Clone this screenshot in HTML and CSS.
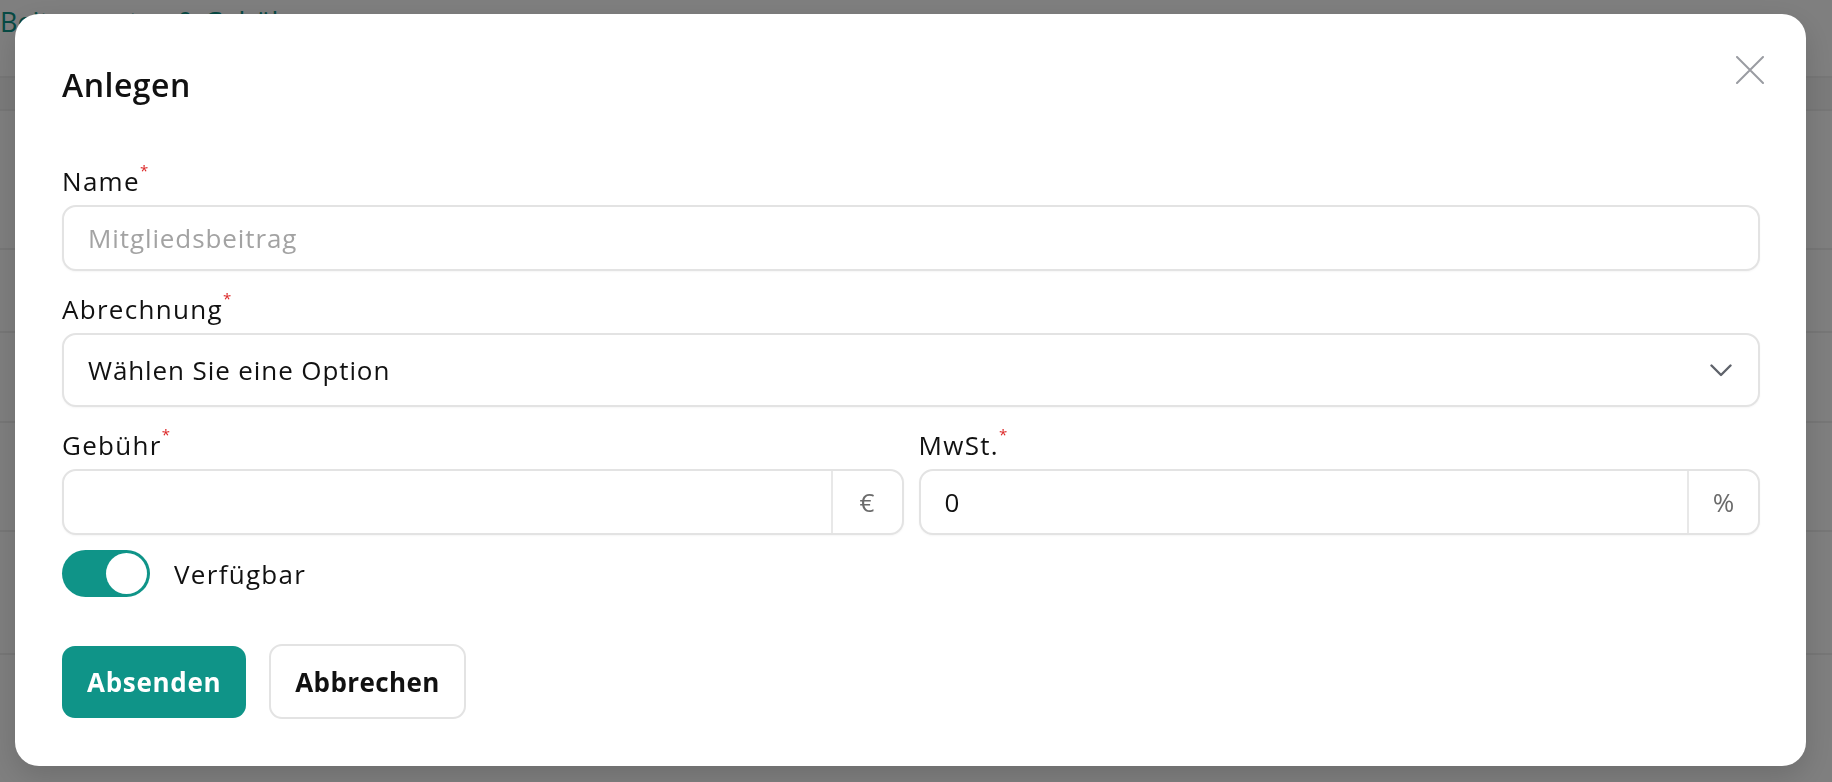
FILE: index.html
```html
<!DOCTYPE html>
<html lang="de">
<head>
<meta charset="utf-8">
<title>Anlegen</title>
<link rel="stylesheet" href="styles.css">
</head>
<body>
<div class="page">
  <h1 class="page-title">Beitragsarten &amp; Gebühren</h1>
  <div class="table">
    <div class="row head"></div>
    <div class="row"></div>
    <div class="row"></div>
    <div class="row"></div>
    <div class="row"></div>
    <div class="row"></div>
  </div>
</div>
<div class="overlay"></div>
<div class="modal" role="dialog">
  <h2 class="modal-title">Anlegen</h2>
  <button class="close" aria-label="Schließen">
    <svg width="28" height="28" viewBox="0 0 28 28"><path d="M1 1 L27 27 M27 1 L1 27" stroke="#9a9ca2" stroke-width="2" fill="none" stroke-linecap="round"/></svg>
  </button>
  <form class="form">
    <div class="field">
      <label class="label">Name<sup class="req">*</sup></label>
      <div class="input"><span class="placeholder">Mitgliedsbeitrag</span></div>
    </div>
    <div class="field">
      <label class="label">Abrechnung<sup class="req">*</sup></label>
      <div class="input select"><span class="value">Wählen Sie eine Option</span>
        <svg class="chev" width="22" height="13" viewBox="0 0 22 13"><path d="M1.5 1.5 L11 11 L20.5 1.5" stroke="#5f636b" stroke-width="2.4" fill="none" stroke-linecap="round" stroke-linejoin="round"/></svg>
      </div>
    </div>
    <div class="two">
      <div class="field">
        <label class="label">Gebühr<sup class="req">*</sup></label>
        <div class="input group"><span class="grow"></span><span class="addon">€</span></div>
      </div>
      <div class="field">
        <label class="label">MwSt.<sup class="req">*</sup></label>
        <div class="input group"><span class="grow value">0</span><span class="addon">%</span></div>
      </div>
    </div>
    <div class="switch-row">
      <span class="switch"><span class="knob"></span></span>
      <span class="switch-label">Verfügbar</span>
    </div>
    <div class="actions">
      <button type="button" class="btn primary">Absenden</button>
      <button type="button" class="btn secondary">Abbrechen</button>
    </div>
  </form>
</div>
</body>
</html>
```
FILE: styles.css
```css
html, body {
  margin: 0;
  padding: 0;
  height: 100%;
  overflow: hidden;
}
body {
  font-family: "Open Sans", Lato, sans-serif;
  background: #ffffff;
  color: #111111;
}
.page-title {
  margin: 0;
  padding: 6px 0 0 0;
  font-size: 27px;
  font-weight: 500;
  line-height: 32px;
  color: #0d9488;
  height: 76px;
  box-sizing: border-box;
}
.table {
  border-top: 2px solid #eeeeee;
}
.row {
  border-bottom: 2px solid #eeeeee;
  box-sizing: border-box;
}
.row.head { height: 33px; background: #f6f6f6; }
.row:nth-child(2) { height: 139px; }
.row:nth-child(3) { height: 83px; }
.row:nth-child(4) { height: 90px; }
.row:nth-child(5) { height: 109px; }
.row:nth-child(6) { height: 123px; }

.overlay {
  position: fixed;
  inset: 0;
  background: rgba(0, 0, 0, 0.5);
}
.modal {
  position: fixed;
  left: 15px;
  top: 14px;
  width: 1791px;
  box-sizing: border-box;
  padding: 51px 46px 47px 47px;
  background: #ffffff;
  border-radius: 24px;
  box-shadow: 0 10px 30px rgba(0, 0, 0, 0.15);
}
.modal-title {
  margin: 0;
  font-size: 32px;
  line-height: 40px;
  font-weight: 600;
  letter-spacing: 0.5px;
  color: #111111;
}
.close {
  position: absolute;
  top: 42px;
  right: 42px;
  width: 28px;
  height: 28px;
  padding: 0;
  border: 0;
  background: transparent;
}
.close svg { display: block; }
.form {
  margin-top: 60px;
  display: flex;
  flex-direction: column;
  gap: 22px;
}
.field {
  display: flex;
  flex-direction: column;
  gap: 8px;
  min-width: 0;
}
.label {
  font-size: 26px;
  line-height: 32px;
  font-weight: 500;
  letter-spacing: 1.3px;
  color: #111111;
}
.req {
  color: #dc2626;
  font-size: 15px;
  vertical-align: top;
  line-height: 15px;
  margin-left: 0;
  letter-spacing: 0;
  position: relative;
  top: -2px;
}
.input {
  height: 66px;
  box-sizing: border-box;
  border: 2px solid #e3e3e3;
  border-radius: 14px;
  display: flex;
  align-items: center;
  padding: 0 24px;
  font-size: 26px;
  letter-spacing: 0.9px;
  background: #ffffff;
  box-shadow: 0 1px 2px rgba(0, 0, 0, 0.04);
}
.placeholder { color: #a3a3a3; }
.value { color: #111111; }
.select {
  height: 74px;
  justify-content: space-between;
  padding-right: 26px;
}
.chev { display: block; }
.two {
  display: grid;
  grid-template-columns: 1fr 1fr;
  gap: 15px;
}
.group {
  padding: 0;
  align-items: stretch;
}
.group .grow {
  flex: 1;
  display: flex;
  align-items: center;
  padding-left: 24px;
}
.addon {
  width: 69px;
  border-left: 2px solid #e8e8e8;
  display: flex;
  align-items: center;
  justify-content: center;
  color: #6b6b6b;
  font-size: 26px;
  letter-spacing: 0;
}
.switch-row {
  margin-top: -7px;
  display: flex;
  align-items: center;
  gap: 24px;
}
.switch {
  width: 88px;
  height: 47px;
  border-radius: 24px;
  background: #0f9488;
  display: flex;
  align-items: center;
  justify-content: flex-end;
  padding: 0 3px;
  box-sizing: border-box;
}
.knob {
  width: 41px;
  height: 41px;
  border-radius: 50%;
  background: #ffffff;
}
.switch-label {
  font-size: 26px;
  font-weight: 500;
  letter-spacing: 1.3px;
  color: #111111;
}
.actions {
  margin-top: 25px;
  display: flex;
  align-items: center;
  gap: 23px;
}
.btn {
  font-family: "Open Sans", Lato, sans-serif;
  font-size: 26px;
  font-weight: 700;
  letter-spacing: 0.7px;
  border-radius: 13px;
  cursor: pointer;
  box-sizing: border-box;
}
.primary {
  height: 72px;
  padding: 0 25px;
  background: #0f9488;
  color: #ffffff;
  border: 0;
}
.secondary {
  height: 75px;
  padding: 0 24px;
  letter-spacing: 0.4px;
  background: #ffffff;
  color: #111111;
  border: 2px solid #e3e3e3;
}
```
